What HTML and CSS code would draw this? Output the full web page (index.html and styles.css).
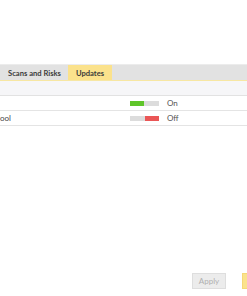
FILE: index.html
```html
<!DOCTYPE html>
<html>
<head>
<meta charset="utf-8">
<link rel="stylesheet" href="styles.css">
</head>
<body>
<div class="page">
  <div class="tabbar">
    <div class="tab">Scans and Risks</div>
    <div class="tab active">Updates</div>
  </div>
  <div class="subhead"></div>
  <div class="row">
    <span class="label"></span>
    <span class="toggle on"><span class="fill"></span></span>
    <span class="state">On</span>
  </div>
  <div class="row">
    <span class="label">ool</span>
    <span class="toggle off"><span class="fill"></span></span>
    <span class="state">Off</span>
  </div>
  <div class="footer">
    <button class="btn apply">Apply</button>
    <button class="btn primary"></button>
  </div>
</div>
</body>
</html>
```
FILE: styles.css
```css
html, body {
  margin: 0;
  padding: 0;
  background: #ffffff;
  overflow: hidden;
}
.page {
  width: 247px;
  height: 296px;
  padding-top: 64px;
  box-sizing: border-box;
  font-family: Lato, "Noto Sans", sans-serif;
  font-size: 8px;
  color: #333333;
  overflow: hidden;
}
.tabbar {
  display: flex;
  height: 17px;
  background: #e2e2e2;
  border-top: 1px solid #ececec;
  border-bottom: 1px solid #f7e7a3;
  box-sizing: border-box;
}
.tab {
  display: flex;
  align-items: center;
  padding: 0 7px 0 8px;
  font-size: 7.6px;
  font-weight: 700;
  color: #3a3a3a;
}
.tab.active {
  background: #fbe28c;
  padding: 0 8px;
}
.subhead {
  height: 14px;
  background: #f6f6f8;
  border-bottom: 1px solid #e2e2e2;
}
.row {
  display: flex;
  align-items: center;
  height: 14px;
  border-bottom: 1px solid #e4e4e4;
}
.label {
  width: 130px;
  color: #444444;
}
.toggle {
  display: flex;
  width: 29px;
  height: 5px;
  background: #dcdcdc;
}
.toggle .fill {
  width: 14px;
  height: 5px;
}
.toggle.on .fill {
  background: #5fc52a;
}
.toggle.off {
  justify-content: flex-end;
}
.toggle.off .fill {
  background: #ea5656;
}
.state {
  margin-left: 8px;
  color: #555555;
}
.footer {
  display: flex;
  gap: 16px;
  padding-left: 192px;
  margin-top: 147px;
}
.btn {
  flex: none;
  height: 16px;
  padding: 0;
  font-family: Lato, "Noto Sans", sans-serif;
  font-size: 8px;
  border: 1px solid #dedede;
  box-sizing: border-box;
}
.apply {
  width: 34px;
  background: #ececec;
  color: #b0b0b0;
}
.primary {
  width: 40px;
  background: #fbe28c;
  border-color: #f6d877;
}
```
